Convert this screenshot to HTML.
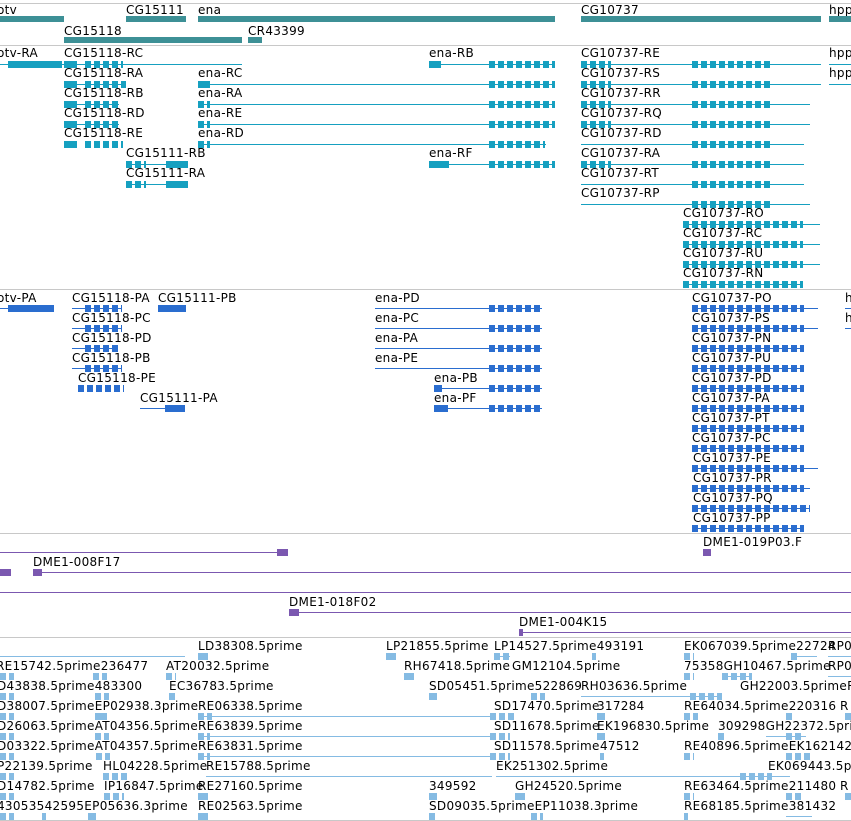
<!DOCTYPE html>
<html><head><meta charset="utf-8"><style>
body{margin:0;width:851px;height:821px;overflow:hidden;background:#fff;position:relative;font-family:"DejaVu Sans","Liberation Sans",sans-serif}
div{position:absolute}
.t{font-size:12px;line-height:14px;color:#000;white-space:nowrap;letter-spacing:0.3px;transform:translateY(1px)}
.s{height:1px;background:#c8c8c8;left:0;width:851px}
.a{background:#3d9096;height:6px}
.b{--c:#16a0c0}.p{--c:#2a6dcf}.v{--c:#7b58b0}.c{--c:#85bbe3}
.g{height:1px;background:var(--c)}
.k{height:7px;background:var(--c)}
.k.r{background:repeating-linear-gradient(90deg,var(--c) 0 6px,transparent 6px 9px)}
</style></head><body>
<div class="s" style="top:3px"></div>
<div class="s" style="top:45px"></div>
<div class="s" style="top:289px"></div>
<div class="s" style="top:533px"></div>
<div class="s" style="top:637px"></div>
<div class="s" style="top:820px"></div>

<div class="t" style="left:-3px;top:2px">otv</div>
<div class="a" style="left:0;top:16px;width:64px"></div>
<div class="t" style="left:126px;top:2px">CG15111</div>
<div class="a" style="left:126px;top:16px;width:60px"></div>
<div class="t" style="left:198px;top:2px">ena</div>
<div class="a" style="left:198px;top:16px;width:357px"></div>
<div class="t" style="left:581px;top:2px">CG10737</div>
<div class="a" style="left:581px;top:16px;width:240px"></div>
<div class="t" style="left:829px;top:2px">hpp</div>
<div class="a" style="left:829px;top:16px;width:22px"></div>
<div class="t" style="left:64px;top:23px">CG15118</div>
<div class="a" style="left:64px;top:37px;width:178px"></div>
<div class="t" style="left:248px;top:23px">CR43399</div>
<div class="a" style="left:248px;top:37px;width:14px"></div>

<div class="b">
<div class="t" style="left:-3px;top:45px">otv-RA</div>
<div class="g" style="left:0;top:64px;width:64px"></div><div class="k" style="left:8px;top:61px;width:54px"></div>
<div class="t" style="left:64px;top:45px">CG15118-RC</div>
<div class="g" style="left:64px;top:64px;width:178px"></div><div class="k" style="left:64px;top:61px;width:13px"></div><div class="k r" style="left:85px;top:61px;width:38px"></div>
<div class="t" style="left:429px;top:45px">ena-RB</div>
<div class="g" style="left:429px;top:64px;width:126px"></div><div class="k" style="left:429px;top:61px;width:12px"></div><div class="k r" style="left:489px;top:61px;width:66px"></div>
<div class="t" style="left:581px;top:45px">CG10737-RE</div>
<div class="g" style="left:581px;top:64px;width:240px"></div><div class="k r" style="left:692px;top:61px;width:80px"></div><div class="k r" style="left:581px;top:61px;width:30px"></div>
<div class="t" style="left:829px;top:45px">hpp</div><div class="g" style="left:829px;top:64px;width:22px"></div>

<div class="t" style="left:64px;top:65px">CG15118-RA</div>
<div class="k" style="left:64px;top:81px;width:13px"></div><div class="k r" style="left:85px;top:81px;width:41px"></div><div class="g" style="left:64px;top:84px;width:62px"></div>
<div class="t" style="left:198px;top:65px">ena-RC</div>
<div class="g" style="left:198px;top:84px;width:357px"></div><div class="k" style="left:198px;top:81px;width:12px"></div><div class="k r" style="left:489px;top:81px;width:66px"></div>
<div class="t" style="left:581px;top:65px">CG10737-RS</div>
<div class="g" style="left:581px;top:84px;width:240px"></div><div class="k r" style="left:581px;top:81px;width:30px"></div><div class="k r" style="left:692px;top:81px;width:80px"></div>
<div class="t" style="left:829px;top:65px">hpp</div><div class="g" style="left:829px;top:84px;width:22px"></div>

<div class="t" style="left:64px;top:85px">CG15118-RB</div>
<div class="k" style="left:64px;top:101px;width:13px"></div><div class="k r" style="left:85px;top:101px;width:34px"></div><div class="g" style="left:64px;top:104px;width:55px"></div>
<div class="t" style="left:198px;top:85px">ena-RA</div>
<div class="g" style="left:198px;top:104px;width:357px"></div><div class="k r" style="left:198px;top:101px;width:12px"></div><div class="k r" style="left:489px;top:101px;width:66px"></div>
<div class="t" style="left:581px;top:85px">CG10737-RR</div>
<div class="g" style="left:581px;top:104px;width:229px"></div><div class="k r" style="left:581px;top:101px;width:30px"></div><div class="k r" style="left:692px;top:101px;width:80px"></div>

<div class="t" style="left:64px;top:105px">CG15118-RD</div>
<div class="k" style="left:64px;top:121px;width:13px"></div><div class="k r" style="left:85px;top:121px;width:34px"></div><div class="g" style="left:64px;top:124px;width:55px"></div>
<div class="t" style="left:198px;top:105px">ena-RE</div>
<div class="g" style="left:198px;top:124px;width:357px"></div><div class="k r" style="left:198px;top:121px;width:12px"></div><div class="k r" style="left:489px;top:121px;width:66px"></div>
<div class="t" style="left:581px;top:105px">CG10737-RQ</div>
<div class="g" style="left:581px;top:124px;width:229px"></div><div class="k r" style="left:581px;top:121px;width:30px"></div><div class="k r" style="left:692px;top:121px;width:80px"></div>

<div class="t" style="left:64px;top:125px">CG15118-RE</div>
<div class="k" style="left:64px;top:141px;width:13px"></div><div class="k r" style="left:85px;top:141px;width:38px"></div>
<div class="t" style="left:198px;top:125px">ena-RD</div>
<div class="g" style="left:198px;top:144px;width:348px"></div><div class="k r" style="left:198px;top:141px;width:12px"></div><div class="k r" style="left:489px;top:141px;width:56px"></div>
<div class="t" style="left:581px;top:125px">CG10737-RD</div>
<div class="g" style="left:581px;top:144px;width:223px"></div><div class="k r" style="left:692px;top:141px;width:80px"></div>

<div class="t" style="left:126px;top:145px">CG15111-RB</div>
<div class="g" style="left:126px;top:164px;width:60px"></div><div class="k r" style="left:126px;top:161px;width:20px"></div><div class="k" style="left:166px;top:161px;width:22px"></div>
<div class="t" style="left:429px;top:145px">ena-RF</div>
<div class="g" style="left:429px;top:164px;width:126px"></div><div class="k" style="left:429px;top:161px;width:20px"></div><div class="k r" style="left:489px;top:161px;width:66px"></div>
<div class="t" style="left:581px;top:145px">CG10737-RA</div>
<div class="g" style="left:581px;top:164px;width:223px"></div><div class="k r" style="left:581px;top:161px;width:30px"></div><div class="k r" style="left:692px;top:161px;width:80px"></div>

<div class="t" style="left:126px;top:165px">CG15111-RA</div>
<div class="g" style="left:126px;top:184px;width:60px"></div><div class="k r" style="left:126px;top:181px;width:20px"></div><div class="k" style="left:166px;top:181px;width:22px"></div>
<div class="t" style="left:581px;top:165px">CG10737-RT</div>
<div class="g" style="left:581px;top:184px;width:223px"></div><div class="k r" style="left:692px;top:181px;width:80px"></div>

<div class="t" style="left:581px;top:185px">CG10737-RP</div>
<div class="g" style="left:581px;top:204px;width:229px"></div><div class="k r" style="left:692px;top:201px;width:80px"></div>
<div class="t" style="left:683px;top:205px">CG10737-RO</div>
<div class="g" style="left:683px;top:224px;width:137px"></div><div class="k r" style="left:683px;top:221px;width:120px"></div>
<div class="t" style="left:683px;top:225px">CG10737-RC</div>
<div class="g" style="left:683px;top:244px;width:137px"></div><div class="k r" style="left:683px;top:241px;width:120px"></div>
<div class="t" style="left:683px;top:245px">CG10737-RU</div>
<div class="g" style="left:683px;top:264px;width:137px"></div><div class="k r" style="left:683px;top:261px;width:120px"></div>
<div class="t" style="left:683px;top:265px">CG10737-RN</div>
<div class="g" style="left:683px;top:284px;width:120px"></div><div class="k r" style="left:683px;top:281px;width:120px"></div>
</div>

<div class="p">
<div class="t" style="left:-3px;top:290px">otv-PA</div>
<div class="g" style="left:0;top:308px;width:52px"></div><div class="k" style="left:8px;top:305px;width:46px"></div>
<div class="t" style="left:72px;top:290px">CG15118-PA</div>
<div class="g" style="left:72px;top:308px;width:50px"></div><div class="k r" style="left:85px;top:305px;width:37px"></div>
<div class="t" style="left:158px;top:290px">CG15111-PB</div>
<div class="k" style="left:158px;top:305px;width:28px"></div>
<div class="t" style="left:375px;top:290px">ena-PD</div>
<div class="g" style="left:375px;top:308px;width:167px"></div><div class="k r" style="left:489px;top:305px;width:53px"></div>
<div class="t" style="left:845px;top:290px">h</div><div class="g" style="left:845px;top:308px;width:6px"></div>
<div class="t" style="left:845px;top:310px">h</div><div class="g" style="left:845px;top:328px;width:6px"></div>

<div class="t" style="left:72px;top:310px">CG15118-PC</div>
<div class="g" style="left:72px;top:328px;width:50px"></div><div class="k r" style="left:85px;top:325px;width:37px"></div>
<div class="t" style="left:375px;top:310px">ena-PC</div>
<div class="g" style="left:375px;top:328px;width:167px"></div><div class="k r" style="left:489px;top:325px;width:53px"></div>
<div class="t" style="left:72px;top:330px">CG15118-PD</div>
<div class="g" style="left:72px;top:348px;width:46px"></div><div class="k r" style="left:85px;top:345px;width:33px"></div>
<div class="t" style="left:375px;top:330px">ena-PA</div>
<div class="g" style="left:375px;top:348px;width:167px"></div><div class="k r" style="left:489px;top:345px;width:53px"></div>
<div class="t" style="left:72px;top:350px">CG15118-PB</div>
<div class="g" style="left:72px;top:368px;width:50px"></div><div class="k r" style="left:85px;top:365px;width:37px"></div>
<div class="t" style="left:375px;top:350px">ena-PE</div>
<div class="g" style="left:375px;top:368px;width:167px"></div><div class="k r" style="left:489px;top:365px;width:53px"></div>
<div class="t" style="left:78px;top:370px">CG15118-PE</div>
<div class="k r" style="left:78px;top:385px;width:46px"></div>
<div class="t" style="left:434px;top:370px">ena-PB</div>
<div class="g" style="left:434px;top:388px;width:108px"></div><div class="k" style="left:434px;top:385px;width:8px"></div><div class="k r" style="left:489px;top:385px;width:53px"></div>
<div class="t" style="left:140px;top:390px">CG15111-PA</div>
<div class="g" style="left:140px;top:408px;width:40px"></div><div class="k" style="left:165px;top:405px;width:20px"></div>
<div class="t" style="left:434px;top:390px">ena-PF</div>
<div class="g" style="left:434px;top:408px;width:108px"></div><div class="k" style="left:434px;top:405px;width:14px"></div><div class="k r" style="left:489px;top:405px;width:53px"></div>

<div class="t" style="left:692px;top:290px">CG10737-PO</div><div class="g" style="left:692px;top:308px;width:126px"></div><div class="k r" style="left:692px;top:305px;width:112px"></div>
<div class="t" style="left:692px;top:310px">CG10737-PS</div><div class="g" style="left:692px;top:328px;width:126px"></div><div class="k r" style="left:692px;top:325px;width:112px"></div>
<div class="t" style="left:692px;top:330px">CG10737-PN</div><div class="g" style="left:692px;top:348px;width:112px"></div><div class="k r" style="left:692px;top:345px;width:112px"></div>
<div class="t" style="left:692px;top:350px">CG10737-PU</div><div class="g" style="left:692px;top:368px;width:112px"></div><div class="k r" style="left:692px;top:365px;width:112px"></div>
<div class="t" style="left:692px;top:370px">CG10737-PD</div><div class="g" style="left:692px;top:388px;width:112px"></div><div class="k r" style="left:692px;top:385px;width:112px"></div>
<div class="t" style="left:692px;top:390px">CG10737-PA</div><div class="g" style="left:692px;top:408px;width:112px"></div><div class="k r" style="left:692px;top:405px;width:112px"></div>
<div class="t" style="left:692px;top:410px">CG10737-PT</div><div class="g" style="left:692px;top:428px;width:112px"></div><div class="k r" style="left:692px;top:425px;width:112px"></div>
<div class="t" style="left:692px;top:430px">CG10737-PC</div><div class="g" style="left:692px;top:448px;width:112px"></div><div class="k r" style="left:692px;top:445px;width:112px"></div>
<div class="t" style="left:693px;top:450px">CG10737-PE</div><div class="g" style="left:692px;top:468px;width:126px"></div><div class="k r" style="left:692px;top:465px;width:112px"></div>
<div class="t" style="left:693px;top:470px">CG10737-PR</div><div class="g" style="left:692px;top:488px;width:118px"></div><div class="k r" style="left:692px;top:485px;width:112px"></div>
<div class="t" style="left:693px;top:490px">CG10737-PQ</div><div class="g" style="left:692px;top:508px;width:118px"></div><div class="k r" style="left:692px;top:505px;width:118px"></div>
<div class="t" style="left:693px;top:510px">CG10737-PP</div><div class="g" style="left:692px;top:528px;width:112px"></div><div class="k r" style="left:692px;top:525px;width:112px"></div>
</div>

<div class="v">
<div class="g" style="left:0;top:552px;width:288px"></div><div class="k" style="left:277px;top:549px;width:11px"></div>
<div class="t" style="left:703px;top:534px">DME1-019P03.F</div><div class="k" style="left:703px;top:549px;width:8px"></div>
<div class="t" style="left:33px;top:554px">DME1-008F17</div>
<div class="g" style="left:33px;top:572px;width:818px"></div><div class="k" style="left:33px;top:569px;width:9px"></div><div class="k" style="left:0;top:569px;width:11px"></div>
<div class="g" style="left:0;top:592px;width:851px"></div>
<div class="t" style="left:289px;top:594px">DME1-018F02</div>
<div class="g" style="left:289px;top:612px;width:562px"></div><div class="k" style="left:289px;top:609px;width:10px"></div>
<div class="t" style="left:519px;top:614px">DME1-004K15</div>
<div class="g" style="left:519px;top:632px;width:332px"></div><div class="k" style="left:519px;top:629px;width:4px"></div>
</div>

<div class="c">
<div class="t" style="left:198px;top:638px">LD38308.5prime</div>
<div class="t" style="left:386px;top:638px">LP21855.5prime</div>
<div class="t" style="left:494px;top:638px">LP14527.5prime493191</div>
<div class="t" style="left:684px;top:638px">EK067039.5prime22724</div>
<div class="t" style="left:828px;top:638px">RP0</div>
<div class="g" style="left:0;top:656px;width:185px"></div><div class="k" style="left:198px;top:653px;width:10px"></div><div class="k" style="left:386px;top:653px;width:10px"></div><div class="g" style="left:494px;top:656px;width:16px"></div><div class="k r" style="left:494px;top:653px;width:16px"></div><div class="k" style="left:592px;top:653px;width:4px"></div><div class="k r" style="left:684px;top:653px;width:10px"></div><div class="g" style="left:791px;top:656px;width:26px"></div><div class="k" style="left:791px;top:653px;width:6px"></div><div class="g" style="left:828px;top:656px;width:23px"></div>

<div class="t" style="left:-4px;top:658px">RE15742.5prime236477</div>
<div class="t" style="left:166px;top:658px">AT20032.5prime</div>
<div class="t" style="left:404px;top:658px">RH67418.5prime</div>
<div class="t" style="left:512px;top:658px">GM12104.5prime</div>
<div class="t" style="left:684px;top:658px">75358GH10467.5prime</div>
<div class="t" style="left:828px;top:658px">RP0</div>
<div class="k r" style="left:0;top:673px;width:14px"></div><div class="k r" style="left:93px;top:673px;width:14px"></div><div class="k r" style="left:166px;top:673px;width:10px"></div><div class="k" style="left:404px;top:673px;width:10px"></div><div class="k r" style="left:684px;top:673px;width:10px"></div><div class="g" style="left:722px;top:676px;width:30px"></div><div class="k r" style="left:722px;top:673px;width:30px"></div><div class="g" style="left:828px;top:676px;width:23px"></div>

<div class="t" style="left:-3px;top:678px">D43838.5prime483300</div>
<div class="t" style="left:169px;top:678px">EC36783.5prime</div>
<div class="t" style="left:429px;top:678px">SD05451.5prime522869</div>
<div class="t" style="left:581px;top:678px">RH03636.5prime</div>
<div class="t" style="left:740px;top:678px">GH22003.5primeR</div>
<div class="k r" style="left:0;top:693px;width:14px"></div><div class="k r" style="left:95px;top:693px;width:14px"></div><div class="k" style="left:169px;top:693px;width:6px"></div><div class="k" style="left:429px;top:693px;width:8px"></div><div class="k r" style="left:531px;top:693px;width:14px"></div><div class="g" style="left:581px;top:696px;width:141px"></div><div class="k r" style="left:690px;top:693px;width:32px"></div>

<div class="t" style="left:-3px;top:698px">D38007.5primeEP02938.3prime</div>
<div class="t" style="left:198px;top:698px">RE06338.5prime</div>
<div class="t" style="left:494px;top:698px">SD17470.5prime</div>
<div class="t" style="left:597px;top:698px">317284</div>
<div class="t" style="left:684px;top:698px">RE64034.5prime220316</div>
<div class="t" style="left:840px;top:698px">R</div>
<div class="k r" style="left:0;top:713px;width:14px"></div><div class="k" style="left:95px;top:713px;width:12px"></div><div class="g" style="left:198px;top:716px;width:292px"></div><div class="k r" style="left:198px;top:713px;width:14px"></div><div class="k r" style="left:490px;top:713px;width:24px"></div><div class="k" style="left:597px;top:713px;width:8px"></div><div class="k r" style="left:684px;top:713px;width:14px"></div><div class="k" style="left:786px;top:713px;width:6px"></div><div class="k" style="left:845px;top:713px;width:6px"></div>

<div class="t" style="left:-3px;top:718px">D26063.5primeAT04356.5prime</div>
<div class="t" style="left:198px;top:718px">RE63839.5prime</div>
<div class="t" style="left:494px;top:718px">SD11678.5prime</div>
<div class="t" style="left:597px;top:718px">EK196830.5prime</div>
<div class="t" style="left:718px;top:718px">309298GH22372.5pri</div>
<div class="k r" style="left:0;top:733px;width:14px"></div><div class="k r" style="left:95px;top:733px;width:14px"></div><div class="g" style="left:198px;top:736px;width:292px"></div><div class="k r" style="left:198px;top:733px;width:12px"></div><div class="k r" style="left:490px;top:733px;width:20px"></div><div class="k" style="left:597px;top:733px;width:8px"></div><div class="k" style="left:718px;top:733px;width:6px"></div><div class="g" style="left:766px;top:736px;width:40px"></div><div class="k r" style="left:786px;top:733px;width:18px"></div>

<div class="t" style="left:-3px;top:738px">D03322.5primeAT04357.5prime</div>
<div class="t" style="left:198px;top:738px">RE63831.5prime</div>
<div class="t" style="left:494px;top:738px">SD11578.5prime</div>
<div class="t" style="left:600px;top:738px">47512</div>
<div class="t" style="left:684px;top:738px">RE40896.5primeEK162142.</div>
<div class="k r" style="left:0;top:753px;width:14px"></div><div class="k r" style="left:96px;top:753px;width:14px"></div><div class="g" style="left:198px;top:756px;width:292px"></div><div class="k r" style="left:198px;top:753px;width:12px"></div><div class="k r" style="left:490px;top:753px;width:20px"></div><div class="k" style="left:600px;top:753px;width:4px"></div><div class="k r" style="left:684px;top:753px;width:10px"></div><div class="k r" style="left:786px;top:753px;width:24px"></div>

<div class="t" style="left:-3px;top:758px">P22139.5prime</div>
<div class="t" style="left:103px;top:758px">HL04228.5prime</div>
<div class="t" style="left:206px;top:758px">RE15788.5prime</div>
<div class="t" style="left:496px;top:758px">EK251302.5prime</div>
<div class="t" style="left:768px;top:758px">EK069443.5p</div>
<div class="k r" style="left:0;top:773px;width:14px"></div><div class="k r" style="left:103px;top:773px;width:24px"></div><div class="g" style="left:206px;top:776px;width:286px"></div><div class="g" style="left:496px;top:776px;width:294px"></div><div class="k r" style="left:740px;top:773px;width:32px"></div>

<div class="t" style="left:-3px;top:778px">D14782.5prime</div>
<div class="t" style="left:104px;top:778px">IP16847.5prime</div>
<div class="t" style="left:198px;top:778px">RE27160.5prime</div>
<div class="t" style="left:429px;top:778px">349592</div>
<div class="t" style="left:515px;top:778px">GH24520.5prime</div>
<div class="t" style="left:684px;top:778px">RE63464.5prime211480</div>
<div class="t" style="left:840px;top:778px">R</div>
<div class="k r" style="left:0;top:793px;width:14px"></div><div class="k r" style="left:104px;top:793px;width:20px"></div><div class="k" style="left:198px;top:793px;width:10px"></div><div class="k" style="left:429px;top:793px;width:8px"></div><div class="k" style="left:515px;top:793px;width:10px"></div><div class="k r" style="left:684px;top:793px;width:10px"></div><div class="k r" style="left:786px;top:793px;width:18px"></div><div class="k" style="left:845px;top:793px;width:6px"></div>

<div class="t" style="left:-3px;top:798px">43053542595EP05636.3prime</div>
<div class="t" style="left:198px;top:798px">RE02563.5prime</div>
<div class="t" style="left:429px;top:798px">SD09035.5primeEP11038.3prime</div>
<div class="t" style="left:684px;top:798px">RE68185.5prime381432</div>
<div class="k r" style="left:0;top:813px;width:14px"></div><div class="k" style="left:42px;top:813px;width:4px"></div><div class="k" style="left:88px;top:813px;width:8px"></div><div class="k" style="left:198px;top:813px;width:10px"></div><div class="k" style="left:429px;top:813px;width:6px"></div><div class="k r" style="left:531px;top:813px;width:12px"></div><div class="k" style="left:684px;top:813px;width:4px"></div><div class="g" style="left:786px;top:816px;width:26px"></div>
</div>
</body></html>
